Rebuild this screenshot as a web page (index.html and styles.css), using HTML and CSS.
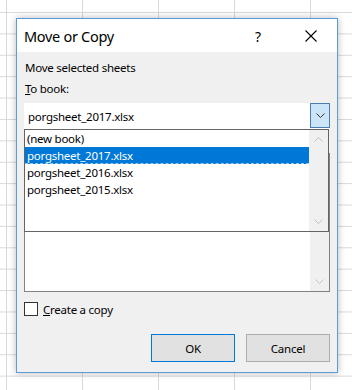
FILE: index.html
```html
<!DOCTYPE html>
<html>
<head>
<meta charset="utf-8">
<link rel="stylesheet" href="styles.css">
</head>
<body>
<div class="dialog">
  <div class="titlebar">
    <div class="title">Move or Copy</div>
    <div class="tb-btn help">?</div>
    <div class="tb-btn close">
      <svg width="12" height="12" viewBox="0 0 12 12"><path d="M0.5 0.5 L11.5 11.5 M11.5 0.5 L0.5 11.5" stroke="#000" stroke-width="1.1" fill="none"/></svg>
    </div>
  </div>
  <div class="content">
    <div class="label first">Move selected sheets</div>
    <div class="label second"><u>T</u>o book:</div>
    <div class="combo">
      <div class="combo-text">porgsheet_2017.xlsx</div>
      <div class="combo-btn">
        <svg width="9" height="5" viewBox="0 0 9 5"><polyline points="0.5,0.5 4.5,4.5 8.5,0.5" stroke="#333" stroke-width="1" fill="none"/></svg>
      </div>
      <div class="dropdown">
        <div class="items">
          <div class="item">(new book)</div>
          <div class="item selected">porgsheet_2017.xlsx</div>
          <div class="item">porgsheet_2016.xlsx</div>
          <div class="item">porgsheet_2015.xlsx</div>
        </div>
        <div class="scrollbar">
          <svg width="9" height="5" viewBox="0 0 9 5"><polyline points="0.5,4.5 4.5,0.5 8.5,4.5" stroke="#c2c2c2" stroke-width="1" fill="none"/></svg>
          <svg width="9" height="5" viewBox="0 0 9 5"><polyline points="0.5,0.5 4.5,4.5 8.5,0.5" stroke="#c2c2c2" stroke-width="1" fill="none"/></svg>
        </div>
      </div>
    </div>
    <div class="spacer"></div>
    <div class="listbox">
      <div class="lb-items"></div>
      <div class="scrollbar">
        <svg width="9" height="5" viewBox="0 0 9 5"><polyline points="0.5,4.5 4.5,0.5 8.5,4.5" stroke="#c2c2c2" stroke-width="1" fill="none"/></svg>
        <svg width="9" height="5" viewBox="0 0 9 5"><polyline points="0.5,0.5 4.5,4.5 8.5,0.5" stroke="#c2c2c2" stroke-width="1" fill="none"/></svg>
      </div>
    </div>
    <div class="check-row">
      <div class="checkbox"></div>
      <div class="check-label"><u>C</u>reate a copy</div>
    </div>
    <div class="buttons">
      <div class="btn default">OK</div>
      <div class="btn">Cancel</div>
    </div>
  </div>
</div>
</body>
</html>
```
FILE: styles.css
```css
html, body {
  margin: 0;
  padding: 0;
}
body {
  width: 352px;
  height: 390px;
  overflow: hidden;
  background-color: #ffffff;
  background-image:
    linear-gradient(to right, #d9d9d9 1px, transparent 1px),
    linear-gradient(to bottom, #d9d9d9 1px, transparent 1px);
  background-size: 76px 100%, 100% 21.4px;
  background-position: 6px 0, 0 12px;
  font-family: "Segoe UI", "Noto Sans", sans-serif;
  color: #000;
  padding-top: 18px;
  padding-left: 16px;
  box-sizing: border-box;
}
.dialog {
  width: 322px;
  height: 355px;
  box-sizing: border-box;
  border: 1px solid #5b9bd8;
  background: #f0f0f0;
  box-shadow: 0 0 7px rgba(0, 0, 0, 0.28);
  display: flex;
  flex-direction: column;
}
.titlebar {
  height: 33px;
  flex: none;
  background: #ffffff;
  display: flex;
  align-items: center;
  padding-left: 7px;
  padding-right: 6px;
}
.title {
  flex: 1;
  font-size: 14.5px;
  letter-spacing: -0.3px;
  padding-top: 1px;
}
.tb-btn {
  width: 40px;
  height: 33px;
  display: flex;
  align-items: center;
  justify-content: center;
}
.help {
  font-size: 14px;
  margin-right: 13px;
  padding-top: 1px;
}
.close svg {
  display: block;
}
.content {
  flex: 1;
  display: flex;
  flex-direction: column;
  padding: 0 7px;
  font-size: 11.5px;
  letter-spacing: -0.25px;
}
.label {
  height: 16px;
  line-height: 16px;
  padding-left: 1px;
}
.first {
  margin-top: 8px;
}
.second {
  margin-top: 5px;
}
.combo {
  position: relative;
  margin-top: 6px;
  height: 26px;
  background: #ffffff;
  display: flex;
  align-items: center;
}
.combo-text {
  flex: 1;
  padding-left: 4px;
}
.combo-btn {
  width: 20px;
  height: 25px;
  box-sizing: border-box;
  align-self: flex-start;
  background: #cce4f7;
  border: 1px solid #4a7eb0;
  display: flex;
  align-items: center;
  justify-content: center;
}
.combo-btn svg, .scrollbar svg {
  display: block;
}
.dropdown {
  position: absolute;
  top: 26px;
  left: 0;
  width: 305px;
  height: 103px;
  box-sizing: border-box;
  border: 1px solid #646464;
  background: #ffffff;
  display: flex;
  z-index: 2;
}
.items {
  flex: 1;
}
.item {
  height: 17px;
  line-height: 17px;
  padding-left: 2px;
  box-sizing: border-box;
}
.item.selected {
  background: #0078d7;
  color: #ffffff;
  border-bottom: 1px dashed #9cc6ea;
}
.scrollbar {
  width: 19px;
  background: #f0f0f0;
  display: flex;
  flex-direction: column;
  justify-content: space-between;
  align-items: center;
  padding: 7px 0 7px;
  box-sizing: border-box;
}
.spacer {
  height: 24px;
}
.listbox {
  height: 139px;
  box-sizing: border-box;
  border: 1px solid #828282;
  background: #ffffff;
  display: flex;
}
.lb-items {
  flex: 1;
}
.check-row {
  margin-top: 10px;
  display: flex;
  align-items: center;
  height: 14px;
}
.checkbox {
  width: 14px;
  height: 14px;
  box-sizing: border-box;
  border: 1px solid #333333;
  background: #ffffff;
}
.check-label {
  margin-left: 5px;
}
.buttons {
  margin-top: 18px;
  display: flex;
  justify-content: flex-end;
  gap: 11px;
}
.btn {
  width: 84px;
  height: 28px;
  box-sizing: border-box;
  border: 1px solid #adadad;
  background: #e1e1e1;
  display: flex;
  align-items: center;
  justify-content: center;
}
.btn.default {
  border-color: #0078d7;
}
```
